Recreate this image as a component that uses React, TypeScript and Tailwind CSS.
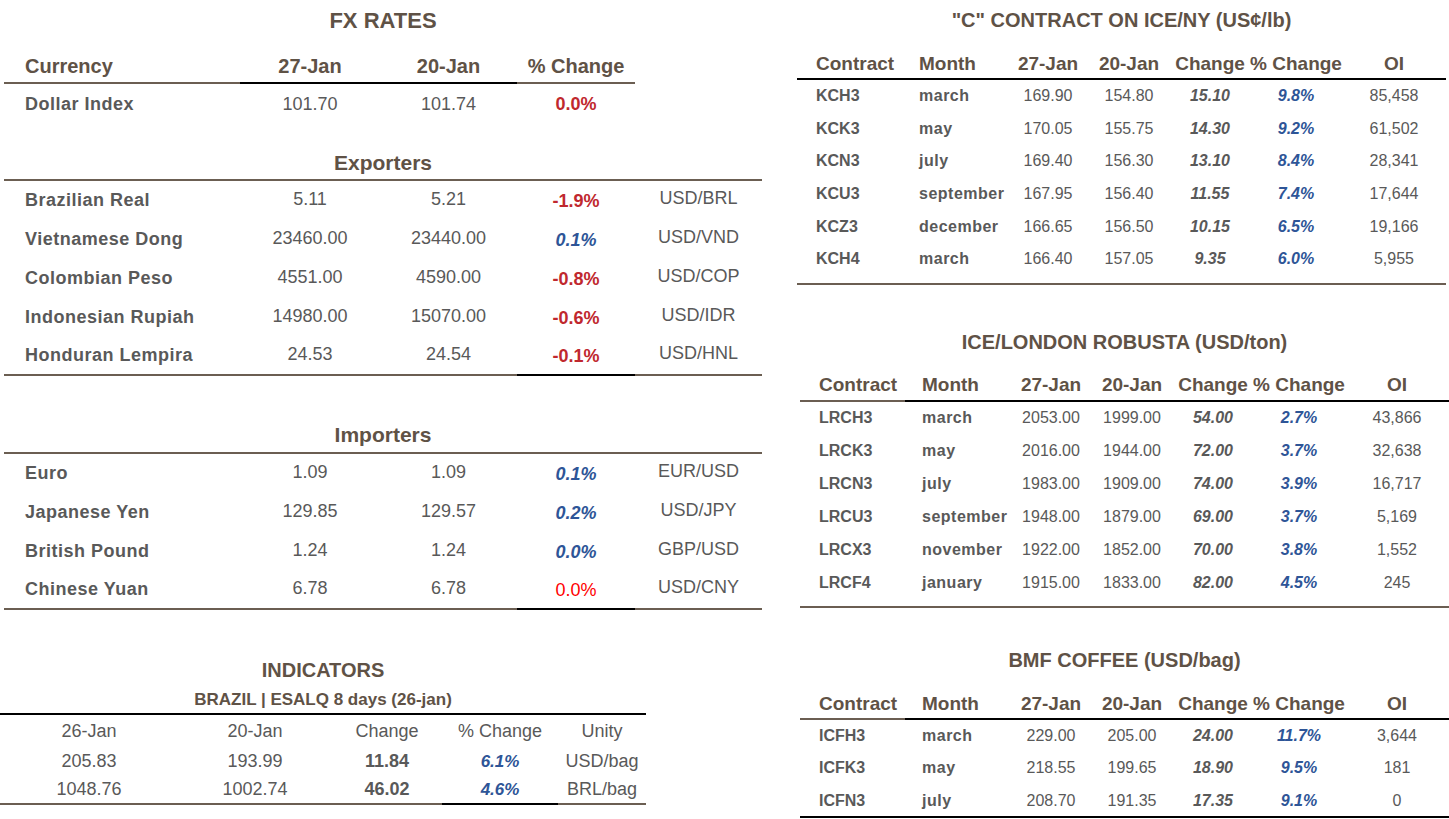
import React from "react";

type Tone = "red" | "blue" | "bright";
type Fx = { name: string; a: string; b: string; pct: string; tone: Tone; unit?: string };
type Contract = { code: string; month: string; a: string; b: string; chg: string; pct: string; oi: string };

const toneCls: Record<Tone, string> = {
  red: "font-bold text-[#c0282e]",
  blue: "font-bold italic text-[#2e5597]",
  bright: "text-[#ff0000]",
};

const exporters: Fx[] = [
  { name: "Brazilian Real", a: "5.11", b: "5.21", pct: "-1.9%", tone: "red", unit: "USD/BRL" },
  { name: "Vietnamese Dong", a: "23460.00", b: "23440.00", pct: "0.1%", tone: "blue", unit: "USD/VND" },
  { name: "Colombian Peso", a: "4551.00", b: "4590.00", pct: "-0.8%", tone: "red", unit: "USD/COP" },
  { name: "Indonesian Rupiah", a: "14980.00", b: "15070.00", pct: "-0.6%", tone: "red", unit: "USD/IDR" },
  { name: "Honduran Lempira", a: "24.53", b: "24.54", pct: "-0.1%", tone: "red", unit: "USD/HNL" },
];

const importers: Fx[] = [
  { name: "Euro", a: "1.09", b: "1.09", pct: "0.1%", tone: "blue", unit: "EUR/USD" },
  { name: "Japanese Yen", a: "129.85", b: "129.57", pct: "0.2%", tone: "blue", unit: "USD/JPY" },
  { name: "British Pound", a: "1.24", b: "1.24", pct: "0.0%", tone: "blue", unit: "GBP/USD" },
  { name: "Chinese Yuan", a: "6.78", b: "6.78", pct: "0.0%", tone: "bright", unit: "USD/CNY" },
];

const arabica: Contract[] = [
  { code: "KCH3", month: "march", a: "169.90", b: "154.80", chg: "15.10", pct: "9.8%", oi: "85,458" },
  { code: "KCK3", month: "may", a: "170.05", b: "155.75", chg: "14.30", pct: "9.2%", oi: "61,502" },
  { code: "KCN3", month: "july", a: "169.40", b: "156.30", chg: "13.10", pct: "8.4%", oi: "28,341" },
  { code: "KCU3", month: "september", a: "167.95", b: "156.40", chg: "11.55", pct: "7.4%", oi: "17,644" },
  { code: "KCZ3", month: "december", a: "166.65", b: "156.50", chg: "10.15", pct: "6.5%", oi: "19,166" },
  { code: "KCH4", month: "march", a: "166.40", b: "157.05", chg: "9.35", pct: "6.0%", oi: "5,955" },
];

const robusta: Contract[] = [
  { code: "LRCH3", month: "march", a: "2053.00", b: "1999.00", chg: "54.00", pct: "2.7%", oi: "43,866" },
  { code: "LRCK3", month: "may", a: "2016.00", b: "1944.00", chg: "72.00", pct: "3.7%", oi: "32,638" },
  { code: "LRCN3", month: "july", a: "1983.00", b: "1909.00", chg: "74.00", pct: "3.9%", oi: "16,717" },
  { code: "LRCU3", month: "september", a: "1948.00", b: "1879.00", chg: "69.00", pct: "3.7%", oi: "5,169" },
  { code: "LRCX3", month: "november", a: "1922.00", b: "1852.00", chg: "70.00", pct: "3.8%", oi: "1,552" },
  { code: "LRCF4", month: "january", a: "1915.00", b: "1833.00", chg: "82.00", pct: "4.5%", oi: "245" },
];

const bmf: Contract[] = [
  { code: "ICFH3", month: "march", a: "229.00", b: "205.00", chg: "24.00", pct: "11.7%", oi: "3,644" },
  { code: "ICFK3", month: "may", a: "218.55", b: "199.65", chg: "18.90", pct: "9.5%", oi: "181" },
  { code: "ICFN3", month: "july", a: "208.70", b: "191.35", chg: "17.35", pct: "9.1%", oi: "0" },
];

const fxGrid = "grid grid-cols-[236px_140px_137px_118px_127px]";
const ctGrid = "grid grid-cols-[105px_106px_80px_82px_80px_92px_104px]";

// bottom segments of the last row in each FX block: brown, brown, brown, black, brown
const lastSeg = [
  "border-b-2 border-[#6b5e52]",
  "border-b-2 border-[#6b5e52]",
  "border-b-2 border-[#6b5e52]",
  "border-b-2 border-black",
  "border-b-2 border-[#6b5e52]",
];

function FxRow({ r, last }: { r: Fx; last?: boolean }) {
  const cell = "h-[39px] flex items-center";
  return (
    <div className={fxGrid}>
      <div className={`${cell} pl-[21px] font-bold tracking-[0.5px] text-[#595959] ${last ? lastSeg[0] : ""}`}>{r.name}</div>
      <div className={`${cell} justify-center pb-[3px] ${last ? lastSeg[1] : ""}`}>{r.a}</div>
      <div className={`${cell} justify-center pb-[3px] ${last ? lastSeg[2] : ""}`}>{r.b}</div>
      <div className={`${cell} justify-center pt-[2px] ${toneCls[r.tone]} ${last ? lastSeg[3] : ""}`}>{r.pct}</div>
      <div className={`${cell} justify-center pb-[5px] ${last ? lastSeg[4] : ""}`}>{r.unit}</div>
    </div>
  );
}

function ContractTable({ title, rows, brownFirst, rowH, titleCls, headCls, bottomCls }: {
  title: string;
  rows: Contract[];
  brownFirst?: boolean;
  rowH: string;
  titleCls: string;
  headCls: string;
  bottomCls: string;
}) {
  const heads = ["Contract", "Month", "27-Jan", "20-Jan", "Change", "% Change", "OI"];
  return (
    <div className="w-[649px]">
      <div className={`${titleCls} flex items-center justify-center text-[20px] font-bold text-[#5f5246]`}>{title}</div>
      <div className={ctGrid}>
        {heads.map((h, i) => (
          <div
            key={h}
            className={`${headCls} flex items-center border-b-2 text-[19px] font-bold text-[#5f5246] ${
              i === 0 && brownFirst ? "border-[#6b5e52]" : "border-black"
            } ${i === 0 ? "pl-[19px]" : i === 1 ? "pl-[17px]" : "justify-center"}`}
          >
            {h}
          </div>
        ))}
      </div>
      {rows.map((r) => (
        <div key={r.code} className={`${ctGrid} text-[16px] text-[#595959]`}>
          <div className={`${rowH} flex items-center pl-[19px] font-bold`}>{r.code}</div>
          <div className={`${rowH} flex items-center pl-[17px] font-bold tracking-[0.5px]`}>{r.month}</div>
          <div className={`${rowH} flex items-center justify-center`}>{r.a}</div>
          <div className={`${rowH} flex items-center justify-center`}>{r.b}</div>
          <div className={`${rowH} flex items-center justify-center font-bold italic`}>{r.chg}</div>
          <div className={`${rowH} flex items-center justify-center font-bold italic text-[#2e5597]`}>{r.pct}</div>
          <div className={`${rowH} flex items-center justify-center`}>{r.oi}</div>
        </div>
      ))}
      <div className={bottomCls} />
    </div>
  );
}

export default function App() {
  return (
    <div className="w-[1449px] h-[819px] overflow-hidden bg-white flex font-['Liberation_Sans',Arial,sans-serif] text-[18px] text-[#595959]">
      {/* left: fx + indicators */}
      <div className="w-[797px] shrink-0 flex flex-col">
        <div className="ml-[4px] w-[758px]">
          <div className="h-[40px] flex items-center justify-center text-[22px] font-bold text-[#5f5246]">FX RATES</div>

          <div className={`${fxGrid} text-[20px] font-bold text-[#5f5246]`}>
            <div className="h-[44px] pt-[10px] flex items-center pl-[21px] border-b-2 border-[#6b5e52]">Currency</div>
            <div className="h-[44px] pt-[10px] flex items-center justify-center border-b-2 border-black">27-Jan</div>
            <div className="h-[44px] pt-[10px] flex items-center justify-center border-b-2 border-black">20-Jan</div>
            <div className="h-[44px] pt-[10px] flex items-center justify-center border-b-2 border-[#6b5e52]">% Change</div>
            <div className="h-[44px]" />
          </div>

          <div className={fxGrid}>
            <div className="h-[40px] flex items-center pl-[21px] font-bold tracking-[0.5px]">Dollar Index</div>
            <div className="h-[40px] flex items-center justify-center">101.70</div>
            <div className="h-[40px] flex items-center justify-center">101.74</div>
            <div className="h-[40px] flex items-center justify-center font-bold text-[#c0282e]">0.0%</div>
            <div className="h-[40px]" />
          </div>

          <div className="h-[57px] pt-[23px] flex items-center justify-center border-b-2 border-[#6b5e52] text-[21px] font-bold text-[#5f5246]">
            Exporters
          </div>
          {exporters.map((r, i) => (
            <FxRow key={r.name} r={r} last={i === exporters.length - 1} />
          ))}

          <div className="h-[78px] pt-[42px] flex items-center justify-center border-b-2 border-[#6b5e52] text-[21px] font-bold text-[#5f5246]">
            Importers
          </div>
          {importers.map((r, i) => (
            <FxRow key={r.name} r={r} last={i === importers.length - 1} />
          ))}
        </div>

        {/* indicators */}
        <div className="w-[646px]">
          <div className="mt-[48px] h-[24px] flex items-center justify-center text-[20px] font-bold text-[#5f5246]">INDICATORS</div>
          <div className="mt-[7px] h-[26px] pb-[2px] flex items-center justify-center border-b-2 border-black text-[17px] font-bold text-[#5f5246]">
            BRAZIL | ESALQ 8 days (26-jan)
          </div>
          <div className="grid grid-cols-[178px_154px_110px_116px_88px]">
            {["26-Jan", "20-Jan", "Change", "% Change", "Unity"].map((h) => (
              <div key={h} className="h-[32px] pt-[1px] flex items-center justify-center">{h}</div>
            ))}
          </div>
          {[
            { a: "205.83", b: "193.99", c: "11.84", p: "6.1%", u: "USD/bag" },
            { a: "1048.76", b: "1002.74", c: "46.02", p: "4.6%", u: "BRL/bag" },
          ].map((r, i) => {
            const line = i === 1;
            return (
              <div key={r.a} className="grid grid-cols-[178px_154px_110px_116px_88px]">
                <div className={`h-[29px] flex items-center justify-center ${line ? "border-b-2 border-[#6b5e52]" : ""}`}>{r.a}</div>
                <div className={`h-[29px] flex items-center justify-center ${line ? "border-b-2 border-[#6b5e52]" : ""}`}>{r.b}</div>
                <div className={`h-[29px] flex items-center justify-center font-bold ${line ? "border-b-2 border-[#6b5e52]" : ""}`}>{r.c}</div>
                <div className={`h-[29px] flex items-center justify-center text-[17px] font-bold italic text-[#2e5597] ${line ? "border-b-2 border-black" : ""}`}>{r.p}</div>
                <div className={`h-[29px] flex items-center justify-center ${line ? "border-b-2 border-[#6b5e52]" : ""}`}>{r.u}</div>
              </div>
            );
          })}
        </div>
      </div>

      {/* right: futures tables */}
      <div className="w-[652px] shrink-0 flex flex-col">
        <ContractTable
          title={'"C" CONTRACT ON ICE/NY (US\u00a2/lb)'}
          rows={arabica}
          rowH="h-[32.6px]"
          titleCls="h-[40px]"
          headCls="h-[40px] pt-[10px]"
          bottomCls="h-[9px] border-b-2 border-[#6b5e52]"
        />
        <div className="ml-[3px]">
          <ContractTable
            title="ICE/LONDON ROBUSTA (USD/ton)"
            rows={robusta}
            brownFirst
            rowH="h-[33px]"
            titleCls="mt-[42px] h-[30px]"
            headCls="h-[45px] pt-[14px]"
            bottomCls="h-[8px] border-b-2 border-[#6b5e52]"
          />
          <ContractTable
            title="BMF COFFEE (USD/bag)"
            rows={bmf}
            brownFirst
            rowH="h-[32.5px]"
            titleCls="mt-[37px] h-[30px]"
            headCls="h-[45px] pt-[16px]"
            bottomCls="-mt-[1px] h-[1px] border-b-2 border-black"
          />
        </div>
      </div>
    </div>
  );
}
